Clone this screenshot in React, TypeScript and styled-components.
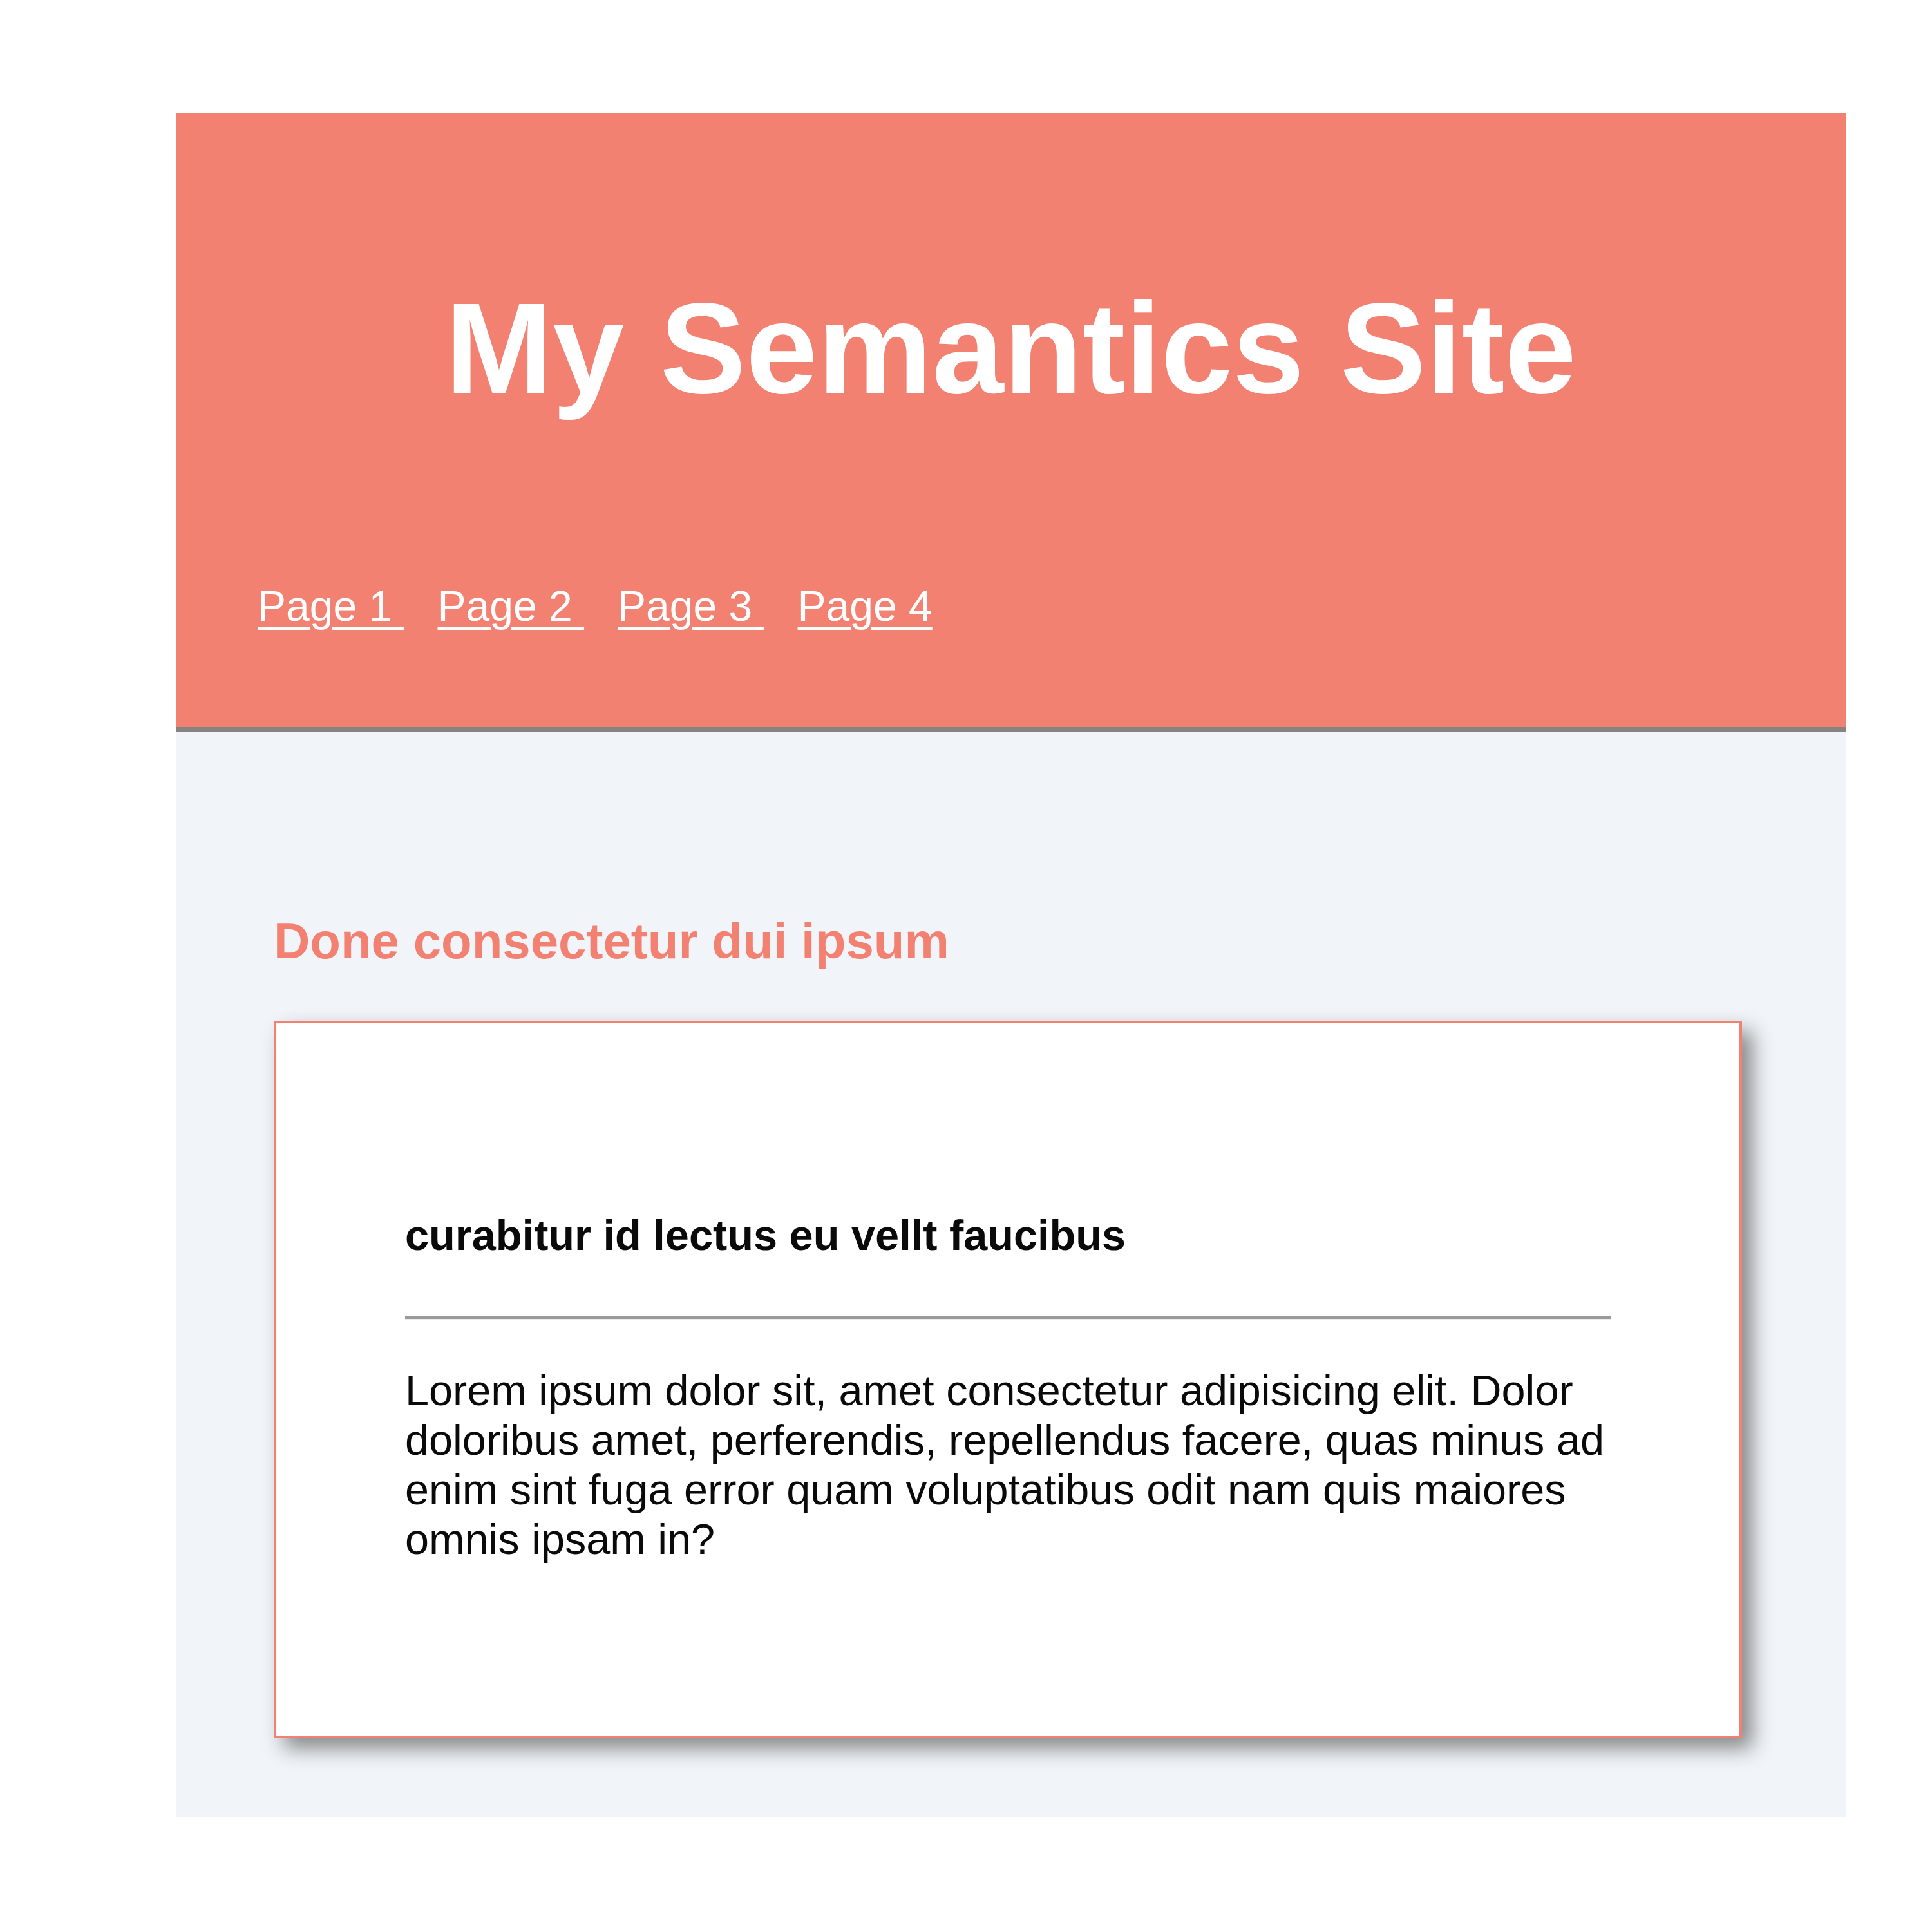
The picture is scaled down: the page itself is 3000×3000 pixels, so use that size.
import React from 'react';
import styled, { createGlobalStyle } from 'styled-components';

const palette = {
  salmon: '#f38171',
  border_gray: '#878383',
  main_bg: '#f1f5fa',
  text: '#0a0a0a',
};

const GlobalStyle = createGlobalStyle`
  html, body {
    margin: 0;
    padding: 0;
    background: #ffffff;
  }
  body {
    font-family: "Liberation Sans", Arial, Helvetica, sans-serif;
    font-size: 66px;
    color: ${palette.text};
  }
  * {
    box-sizing: border-box;
  }
`;

const Page = styled.div`
  width: 2593px;
  margin: 176px 0 180px 273px;
`;

const Header = styled.header`
  display: flex;
  flex-direction: column;
  height: 960px;
  padding: 250px 127px 0;
  background-color: ${palette.salmon};
  border-bottom: 7px solid ${palette.border_gray};
  h1 {
    margin: 0;
    font-size: 200px;
    font-weight: bold;
    color: #ffffff;
    text-align: center;
  }
`;

const Nav = styled.nav`
  display: flex;
  gap: 52px;
  margin-top: 247px;
  a {
    color: #ffffff;
    text-decoration: underline;
    text-decoration-thickness: 5px;
    text-underline-offset: 9px;
    white-space: pre;
  }
`;

const Main = styled.main`
  padding: 280px 158px 122px 152px;
  background-color: ${palette.main_bg};
  h2 {
    margin: 0 0 78px;
    font-size: 78px;
    font-weight: bold;
    color: ${palette.salmon};
  }
`;

const Card = styled.article`
  width: 2280px;
  padding: 291px 200px 266px;
  background-color: #ffffff;
  border: 4px solid ${palette.salmon};
  box-shadow: 16px 16px 30px #868889;
  h3 {
    margin: 0;
    font-size: 66.7px;
    font-weight: bold;
  }
  hr {
    margin: 88px 0 71px;
    border: 0;
    border-top: 4px solid #9a9a9a;
    border-bottom: 2px solid #ececec;
  }
  p {
    margin: 0;
    font-size: 66.6px;
    line-height: 77px;
  }
`;

const links = ['Page 1\u00a0', 'Page 2\u00a0', 'Page 3\u00a0', 'Page 4'];

const App: React.FC = () => (
  <>
    <GlobalStyle />
    <Page>
      <Header>
        <h1>My Semantics Site</h1>
        <Nav>
          {links.map((label) => (
            <a key={label} href="#">
              {label}
            </a>
          ))}
        </Nav>
      </Header>
      <Main>
        <h2>Done consectetur dui ipsum</h2>
        <Card>
          <h3>curabitur id lectus eu vellt faucibus</h3>
          <hr />
          <p>
            Lorem ipsum dolor sit, amet consectetur adipisicing elit. Dolor doloribus amet, perferendis,
            repellendus facere, quas minus ad enim sint fuga error quam voluptatibus odit nam quis maiores
            omnis ipsam in?
          </p>
        </Card>
      </Main>
    </Page>
  </>
);

export default App;
